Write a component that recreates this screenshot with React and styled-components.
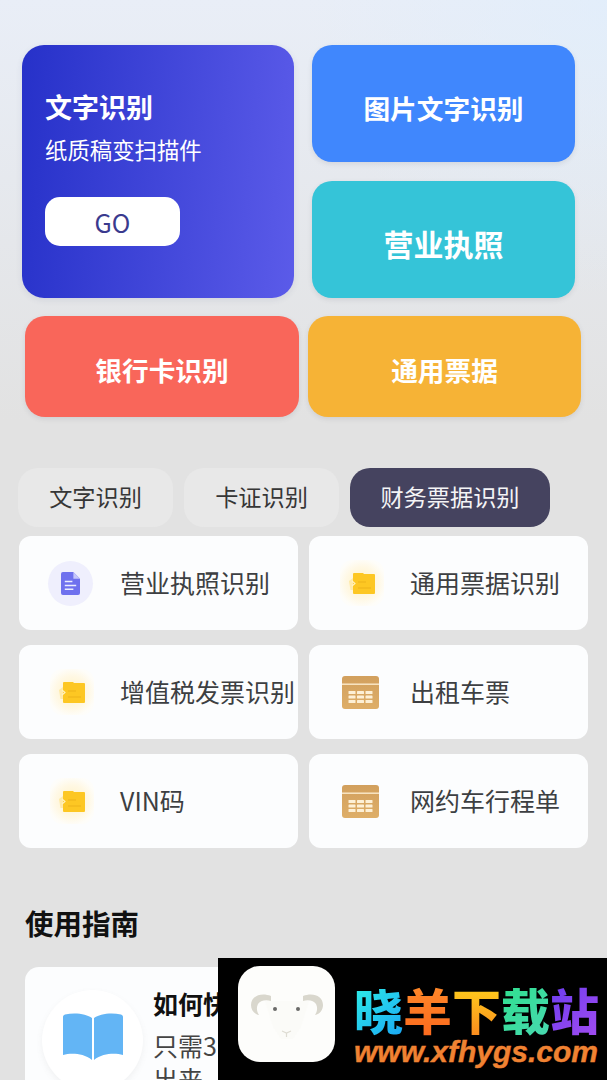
// App.jsx
import React from "react";
import styled, { createGlobalStyle } from "styled-components";

const GlobalStyle = createGlobalStyle`
  html, body {
    margin: 0;
    padding: 0;
    height: 1080px;
    overflow: hidden;
    background: #e2e2e2;
  }
  * {
    box-sizing: border-box;
  }
`;

const Page = styled.div`
  position: relative;
  width: 607px;
  height: 1080px;
  overflow: hidden;
  padding-top: 45px;
  font-family: "Noto Sans CJK SC", "Noto Sans", sans-serif;
  background:
    radial-gradient(circle at 100% 0, rgba(224, 238, 252, 0.7) 0, rgba(226, 240, 255, 0) 300px),
    linear-gradient(180deg, #e9eef7 0, #e2e2e2 420px);
`;

// Top feature cards
const HeroGrid = styled.div`
  display: grid;
  grid-template-columns: 272px 263px;
  column-gap: 18px;
  padding-left: 22px;
`;

const SideStack = styled.div`
  display: flex;
  flex-direction: column;
  gap: 19px;
`;

const MainCard = styled.div`
  height: 253px;
  border-radius: 22px;
  padding: 45px 23px 0;
  color: #fff;
  background: linear-gradient(95deg, #2631c9 0%, #5b5be9 100%);
  box-shadow: 0 2px 6px rgba(60, 70, 120, 0.1);
`;

const MainTitle = styled.div`
  font-size: 27px;
  font-weight: 700;
  line-height: 34px;
`;

const MainSub = styled.div`
  font-size: 22.4px;
  line-height: 32px;
  margin-top: 9px;
`;

const GoButton = styled.div`
  width: 135px;
  height: 49px;
  margin-top: 32px;
  border-radius: 15px;
  background: #fff;
  color: #3a3a8e;
  font-size: 25px;
  display: flex;
  align-items: center;
  justify-content: center;
`;

const ColorCard = styled.div`
  height: ${(p) => p.$h}px;
  border-radius: 20px;
  padding-top: ${(p) => p.$pt || 0}px;
  background: ${(p) => p.$bg};
  color: #fff;
  font-size: ${(p) => p.$fs || 26.7}px;
  font-weight: 700;
  display: flex;
  align-items: center;
  justify-content: center;
  box-shadow: 0 2px 5px rgba(70, 70, 90, 0.12);
`;

const WideGrid = styled.div`
  display: grid;
  grid-template-columns: 274px 273px;
  column-gap: 9px;
  padding-left: 25px;
  margin-top: 18px;
`;

// Tabs
const Tabs = styled.div`
  display: flex;
  gap: 11px;
  padding-left: 18px;
  margin-top: 51px;
`;

const Tab = styled.div`
  height: 59px;
  width: ${(p) => p.$w}px;
  padding-bottom: 3px;
  border-radius: 20px;
  background: ${(p) => (p.$active ? "#45435f" : "#e8e8e8")};
  color: ${(p) => (p.$active ? "#f4f4f6" : "#363636")};
  font-size: 23.2px;
  display: flex;
  align-items: center;
  justify-content: center;
`;

// Recognition list
const ItemGrid = styled.div`
  display: grid;
  grid-template-columns: 279px 279px;
  column-gap: 11px;
  row-gap: 15px;
  padding-left: 19px;
  margin-top: 9px;
`;

const Item = styled.div`
  height: 94px;
  border-radius: 12px;
  background: #fcfdfe;
  display: flex;
  align-items: center;
  color: #3d3f42;
  font-size: 25px;
  white-space: nowrap;
`;

const IconSlot = styled.div`
  flex: none;
  width: 101px;
  padding-left: 29px;
  display: flex;
  align-items: center;
`;

const ItemLabel = styled.span`
  line-height: 1;
  margin-bottom: 2px;
`;

const DocHalo = styled.div`
  width: 45px;
  height: 45px;
  border-radius: 50%;
  background: #efeffd;
  display: flex;
  align-items: center;
  justify-content: center;
`;

const TicketHalo = styled.div`
  width: 44px;
  height: 46px;
  margin-left: 2px;
  border-radius: 12px;
  background: radial-gradient(circle, #fff2c4 0, #fff8e4 50%, #fefdf9 75%, #fcfdfe 100%);
  display: flex;
  align-items: center;
  justify-content: center;
`;

const TableWrap = styled.div`
  margin-left: 4px;
  display: flex;
`;

const DocIcon = () => (
  <DocHalo>
    <svg width="19" height="23" viewBox="0 0 20 24">
      <path d="M2 0h11l7 7v15a2 2 0 0 1-2 2H2a2 2 0 0 1-2-2V2a2 2 0 0 1 2-2z" fill="#6f71ee" />
      <path d="M13 0l7 7h-7z" fill="#c5c6fa" />
      <path d="M4 10h8M4 14h12M4 18h9" stroke="#eceefe" strokeWidth="1.6" />
    </svg>
  </DocHalo>
);

const TicketIcon = () => (
  <TicketHalo>
    <svg width="26" height="22" viewBox="0 0 26 22">
      <path d="M4 2a1 1 0 0 1 1-1h9l1 1h10a1 1 0 0 1 1 1v18a1 1 0 0 1-1 1H5a1 1 0 0 1-1-1z" fill="#fdc723" />
      <path d="M0 9l4-3v12H1.500z" fill="#ffe9a8" />
      <path d="M9 10h8M9 16h13" stroke="#eeb31a" strokeWidth="1.100" />
      <path d="M3 9l3 2.500-3 2.500" stroke="#fff3c4" strokeWidth="1.100" fill="none" />
    </svg>
  </TicketHalo>
);

const TableIcon = () => (
  <TableWrap>
    <svg width="37" height="33" viewBox="0 0 37 33">
      <defs>
        <linearGradient id="goldFill" x1="0" y1="0" x2="0" y2="1">
          <stop offset="0" stopColor="#d2a05e" />
          <stop offset="1" stopColor="#deae68" />
        </linearGradient>
      </defs>
      <rect width="37" height="33" rx="3" fill="url(#goldFill)" />
      <rect y="7.500" width="37" height="1.400" fill="#fbeacb" />
      {[15, 19.500, 24].map((y) =>
        [6.500, 15, 23.500].map((x) => <rect key={`${x}-${y}`} x={x} y={y} width="7" height="3" rx="0.6" fill="#fdf0d6" />)
      )}
    </svg>
  </TableWrap>
);

// Guide
const GuideTitle = styled.div`
  font-size: 28.500px;
  font-weight: 700;
  line-height: 40px;
  color: #111;
  padding-left: 25px;
  margin-top: 55px;
`;

const GuideCard = styled.div`
  width: 560px;
  height: 200px;
  margin: 24px 0 0 25px;
  border-radius: 14px 0 0 0;
  background: #fcfdfe;
  display: flex;
  padding: 22px 0 0 17px;
`;

const BookCircle = styled.div`
  flex: none;
  width: 101px;
  height: 101px;
  margin-top: 1px;
  border-radius: 50%;
  background: #fff;
  box-shadow: 0 3px 6px rgba(120, 120, 120, 0.09);
  display: flex;
  justify-content: center;
  padding-top: 23px;
`;

const GuideBody = styled.div`
  margin-left: 10px;
`;

const GuideHead = styled.div`
  font-size: 25px;
  font-weight: 700;
  line-height: 28px;
  color: #111;
  white-space: nowrap;
`;

const GuideText = styled.div`
  margin-top: 12px;
  font-size: 25px;
  line-height: 33px;
  color: #444;
  width: 385px;
`;

// Watermark strip in the corner
const Watermark = styled.div`
  position: absolute;
  right: 0;
  bottom: 0;
  width: 389px;
  height: 122px;
  background: #000;
  display: flex;
  padding: 8px 0 0 20px;
`;

const LogoTile = styled.div`
  flex: none;
  width: 97px;
  height: 96px;
  padding-top: 8px;
  border-radius: 22px;
  background: #fdfdfb;
  display: flex;
  align-items: center;
  justify-content: center;
`;

const BrandBlock = styled.div`
  margin-left: 19px;
  padding-top: 16px;
  white-space: nowrap;
`;

const BrandName = styled.div`
  display: flex;
  font-size: 49px;
  line-height: 54px;
  font-weight: 900;
`;

const BrandChar = styled.span`
  background: ${(p) => p.$bg};
  -webkit-background-clip: text;
  background-clip: text;
  color: transparent;
`;

const BrandUrl = styled.div`
  font-family: "Liberation Sans", sans-serif;
  font-style: italic;
  font-weight: 700;
  font-size: 30px;
  line-height: 30px;
  margin-top: 1px;
  -webkit-text-stroke: 0.4px #f08232;
  color: #f08232;
`;

const SheepLogo = () => (
  <svg width="72" height="50" viewBox="0 0 72 50">
    <path d="M14 8h44l-8 26-8 12H30l-8-12z" fill="#fbfbf8" />
    <path d="M20 3C10-1 0 3 0 12c0 5 3 9 8 10-2-3-3-7-1-11 2-3 7-5 13-3z" fill="#d9d7cd" />
    <path d="M52 3c10-4 20 0 20 9 0 5-3 9-8 10 2-3 3-7 1-11-2-3-7-5-13-3z" fill="#d9d7cd" />
    <circle cx="24" cy="16" r="2" fill="#6a6a68" />
    <circle cx="47" cy="16" r="2" fill="#6a6a68" />
    <path d="M31 38l4.500 2 4.500-2M35.500 40v4" stroke="#dedcd3" strokeWidth="1.200" fill="none" />
  </svg>
);

const BookIcon = () => (
  <svg width="60" height="47" viewBox="0 0 60 47">
    <path d="M29 5C24 1 12-1 2 1.500 .7 2 0 3 0 4v38c8-2 20-2 29 5z" fill="#63b5f5" />
    <path d="M31 5c5-4 17-6 27-3.500 1.300.5 2 1.500 2 2.500v38c-8-2-20-2-29 5z" fill="#63b5f5" />
  </svg>
);

const items = [
  { label: "营业执照识别", icon: <DocIcon /> },
  { label: "通用票据识别", icon: <TicketIcon /> },
  { label: "增值税发票识别", icon: <TicketIcon /> },
  { label: "出租车票", icon: <TableIcon /> },
  { label: "VIN码", icon: <TicketIcon /> },
  { label: "网约车行程单", icon: <TableIcon /> },
];

const brand = [
  { ch: "晓", bg: "linear-gradient(135deg, #2ff0e6, #1aa8f5)" },
  { ch: "羊", bg: "linear-gradient(180deg, #ff8a2a, #fb6a1e)" },
  { ch: "下", bg: "linear-gradient(180deg, #ffd21c, #fb8c1e)" },
  { ch: "载", bg: "linear-gradient(135deg, #2fe08e, #48d8b0)" },
  { ch: "站", bg: "linear-gradient(135deg, #6a3cf0, #a24cf0)" },
];

export default function App() {
  return (
    <Page>
      <GlobalStyle />
      <HeroGrid>
        <MainCard>
          <MainTitle>文字识别</MainTitle>
          <MainSub>纸质稿变扫描件</MainSub>
          <GoButton>GO</GoButton>
        </MainCard>
        <SideStack>
          <ColorCard $h={117} $bg="#4087fd" $pt={7}>图片文字识别</ColorCard>
          <ColorCard $h={117} $bg="#35c4d8" $fs={30} $pt={6}>营业执照</ColorCard>
        </SideStack>
      </HeroGrid>
      <WideGrid>
        <ColorCard $h={101} $bg="#f9665a" $pt={5}>银行卡识别</ColorCard>
        <ColorCard $h={101} $bg="#f6b336" $pt={5}>通用票据</ColorCard>
      </WideGrid>
      <Tabs>
        <Tab $w={155}>文字识别</Tab>
        <Tab $w={155}>卡证识别</Tab>
        <Tab $w={200} $active>财务票据识别</Tab>
      </Tabs>
      <ItemGrid>
        {items.map((it) => (
          <Item key={it.label}>
            <IconSlot>{it.icon}</IconSlot>
            <ItemLabel>{it.label}</ItemLabel>
          </Item>
        ))}
      </ItemGrid>
      <GuideTitle>使用指南</GuideTitle>
      <GuideCard>
        <BookCircle>
          <BookIcon />
        </BookCircle>
        <GuideBody>
          <GuideHead>如何快速识别文字</GuideHead>
          <GuideText>只需3步，就能将图片中文字识别出来</GuideText>
        </GuideBody>
      </GuideCard>
      <Watermark>
        <LogoTile>
          <SheepLogo />
        </LogoTile>
        <BrandBlock>
          <BrandName>
            {brand.map((b) => (
              <BrandChar key={b.ch} $bg={b.bg}>{b.ch}</BrandChar>
            ))}
          </BrandName>
          <BrandUrl>www.xfhygs.com</BrandUrl>
        </BrandBlock>
      </Watermark>
    </Page>
  );
}
